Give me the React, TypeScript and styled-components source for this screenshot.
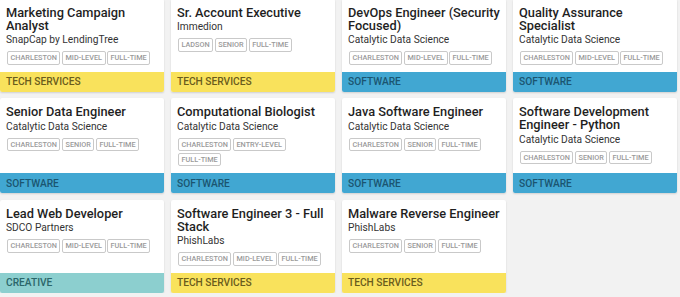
import React from "react";
import styled, { createGlobalStyle } from "styled-components";

type Category = "tech" | "software" | "creative";

type Job = {
	title: string;
	company: string;
	tags: string[];
	category: Category;
};

const jobs: Job[] = [
	{ title: "Marketing Campaign Analyst", company: "SnapCap by LendingTree", tags: ["Charleston", "Mid-Level", "Full-Time"], category: "tech" },
	{ title: "Sr. Account Executive", company: "Immedion", tags: ["Ladson", "Senior", "Full-Time"], category: "tech" },
	{ title: "DevOps Engineer (Security Focused)", company: "Catalytic Data Science", tags: ["Charleston", "Mid-Level", "Full-Time"], category: "software" },
	{ title: "Quality Assurance Specialist", company: "Catalytic Data Science", tags: ["Charleston", "Mid-Level", "Full-Time"], category: "software" },
	{ title: "Senior Data Engineer", company: "Catalytic Data Science", tags: ["Charleston", "Senior", "Full-Time"], category: "software" },
	{ title: "Computational Biologist", company: "Catalytic Data Science", tags: ["Charleston", "Entry-Level", "Full-Time"], category: "software" },
	{ title: "Java Software Engineer", company: "Catalytic Data Science", tags: ["Charleston", "Senior", "Full-Time"], category: "software" },
	{ title: "Software Development Engineer - Python", company: "Catalytic Data Science", tags: ["Charleston", "Senior", "Full-Time"], category: "software" },
	{ title: "Lead Web Developer", company: "SDCO Partners", tags: ["Charleston", "Mid-Level", "Full-Time"], category: "creative" },
	{ title: "Software Engineer 3 - Full Stack", company: "PhishLabs", tags: ["Charleston", "Mid-Level", "Full-Time"], category: "tech" },
	{ title: "Malware Reverse Engineer", company: "PhishLabs", tags: ["Charleston", "Senior", "Full-Time"], category: "tech" },
];

const categoryStyle: Record<Category, { label: string; bg: string; fg: string }> = {
	tech: { label: "Tech Services", bg: "#f9e25c", fg: "#6a5c1c" },
	software: { label: "Software", bg: "#41a7d2", fg: "#1b5570" },
	creative: { label: "Creative", bg: "#8ccfcf", fg: "#2b6669" },
};

const GlobalStyle = createGlobalStyle`
	html, body {
		margin: 0;
		padding: 0;
		background: #f2f2f2;
		font-family: Roboto, "Liberation Sans", Arial, sans-serif;
		overflow: hidden;
	}
`;

const Grid = styled.div`
	display: grid;
	grid-template-columns: repeat(4, 164px);
	column-gap: 7px;
	row-gap: 6.5px;
	margin-top: -1.5px;
`;

const Card = styled.div`
	display: flex;
	flex-direction: column;
	background: #fff;
	border-radius: 2px;
	box-shadow: 0 1px 2px rgba(0, 0, 0, 0.14);
	overflow: hidden;
`;

const Body = styled.div`
	flex: 1;
	padding: 7px 6px 7px;
`;

const Title = styled.div`
	font-size: 12.8px;
	line-height: 13px;
	font-weight: 500;
	color: #1f1f1f;
`;

const Company = styled.div`
	margin-top: 2.6px;
	font-size: 10.2px;
	line-height: 11.6px;
	color: #333;
`;

const Tags = styled.div`
	display: flex;
	flex-wrap: wrap;
	gap: 1.6px 1.5px;
	margin-top: 5.4px;
	padding: 0 3px 0 1px;
`;

const Tag = styled.span`
	display: inline-block;
	height: 13.5px;
	line-height: 11.5px;
	padding: 0 2.5px;
	box-sizing: border-box;
	border: 1px solid #c9c9c9;
	border-radius: 2px;
	font-size: 7.3px;
	font-weight: 500;
	color: #9a9a9a;
	text-transform: uppercase;
	white-space: nowrap;
`;

const Footer = styled.div<{ $bg: string; $fg: string }>`
	height: 20px;
	display: flex;
	align-items: center;
	padding: 0 6px;
	background: ${(p) => p.$bg};
	color: ${(p) => p.$fg};
	font-size: 10.2px;
	font-weight: 500;
	text-transform: uppercase;
`;

function JobCard({ job }: { job: Job }) {
	const cat = categoryStyle[job.category];
	return (
		<Card>
			<Body>
				<Title>{job.title}</Title>
				<Company>{job.company}</Company>
				<Tags>
					{job.tags.map((t) => (
						<Tag key={t}>{t}</Tag>
					))}
				</Tags>
			</Body>
			<Footer $bg={cat.bg} $fg={cat.fg}>
				{cat.label}
			</Footer>
		</Card>
	);
}

export default function App() {
	return (
		<>
			<GlobalStyle />
			<Grid>
				{jobs.map((job, idx) => (
					<JobCard key={idx} job={job} />
				))}
			</Grid>
		</>
	);
}
